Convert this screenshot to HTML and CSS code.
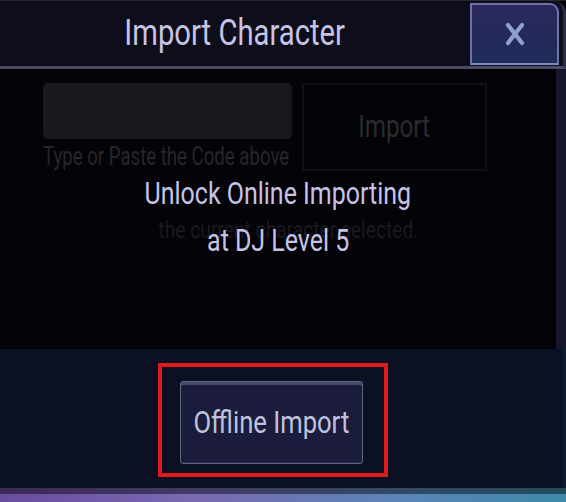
FILE: index.html
```html
<!DOCTYPE html>
<html lang="en">
<head>
<meta charset="utf-8">
<title>Import Character</title>
<link rel="stylesheet" href="styles.css">
</head>
<body>
<div class="dialog">
  <header class="header">
    <div class="title"><span class="cond">Import Character</span></div>
    <button class="close" aria-label="Close">
      <svg width="22" height="24" viewBox="0 0 22 24"><path d="M4 3 L18 21 M18 3 L4 21" stroke="#8ea0d2" stroke-width="4.2" stroke-linecap="round" fill="none"/></svg>
    </button>
  </header>
  <main class="content">
    <div class="dim">
      <div class="form-row">
        <div class="field-col">
          <div class="field"></div>
          <div class="hint"><span class="cond">Type or Paste the Code above</span></div>
        </div>
        <div class="import-btn"><span class="cond">Import</span></div>
      </div>
      <div class="desc"><span class="cond">the current character selected.</span></div>
    </div>
    <div class="lock">
      <span class="cond">Unlock Online Importing</span>
      <span class="cond">at DJ Level 5</span>
    </div>
  </main>
  <footer class="footer">
    <div class="highlight">
      <button class="offline"><span class="cond">Offline Import</span></button>
    </div>
  </footer>
  <div class="bar"></div>
</div>
</body>
</html>
```
FILE: styles.css
```css
html, body {
  margin: 0;
  padding: 0;
  background: #000;
}
body {
  width: 566px;
  height: 502px;
  overflow: hidden;
  font-family: Roboto, "Liberation Sans", sans-serif;
}
.cond {
  display: inline-block;
  white-space: nowrap;
  transform: scaleX(0.78);
  transform-origin: center;
}
.dialog {
  display: flex;
  flex-direction: column;
  height: 502px;
  box-sizing: border-box;
  border-top: 1px solid #262636;
}
.header {
  height: 68px;
  display: flex;
  background: #0e0e1b;
  border-bottom: 3px solid #4a4a66;
  border-right: 3px solid #2c2c48;
  border-top-right-radius: 12px;
  box-sizing: border-box;
}
.title {
  flex: 1;
  display: flex;
  align-items: center;
  justify-content: center;
  color: #c6c4e6;
  font-size: 37px;
  padding: 0 0 3px 0;
}
.title .cond { transform: scaleX(0.79); }
.close {
  width: 89px;
  height: 62px;
  margin: 2px 4px 0 0;
  padding: 0;
  display: flex;
  align-items: center;
  justify-content: center;
  background: linear-gradient(180deg, #2b295c 0%, #23285a 60%, #1f2d5a 100%);
  border: 2px solid #6d72aa;
  border-bottom-color: #7f88bf;
  border-top-right-radius: 9px;
  box-sizing: border-box;
}
.content {
  height: 280px;
  position: relative;
  background: #030308;
  border-right: 10px solid #17172c;
  box-shadow: inset -3px 0 0 #000;
}
.dim {
  padding: 14px 0 0 43px;
}
.form-row {
  display: flex;
  gap: 10px;
}
.field-col {
  display: flex;
  flex-direction: column;
}
.field {
  width: 249px;
  height: 56px;
  background: #19191d;
  border-radius: 5px;
}
.hint {
  color: #26262b;
  font-size: 25px;
  margin-top: 3px;
  width: 249px;
}
.hint .cond { transform: scaleX(0.745); transform-origin: left center; }
.import-btn {
  width: 185px;
  height: 88px;
  box-sizing: border-box;
  border: 2px solid #111116;
  display: flex;
  align-items: center;
  justify-content: center;
  color: #2b2b30;
  font-size: 31px;
  padding-bottom: 2px;
}
.desc {
  margin: 45px 0 0 -33px;
  text-align: center;
  color: #1a1a20;
  font-size: 24px;
  width: 556px;
}
.desc .cond { transform: scaleX(0.8); }
.lock {
  position: absolute;
  left: 0;
  right: 0;
  top: 101px;
  display: flex;
  flex-direction: column;
  align-items: center;
  color: #c6c4e6;
  font-size: 32px;
  line-height: 47px;
}
.footer {
  height: 139px;
  background: #0b1122;
  border-right: 4px solid #101a2e;
  display: flex;
  justify-content: center;
  align-items: flex-start;
  padding: 14px 16px 0 0;
  box-sizing: border-box;
}
.highlight {
  width: 230px;
  height: 114px;
  box-sizing: border-box;
  border: 4px solid #e01b1b;
  display: flex;
  align-items: flex-start;
  padding: 14px 0 0 18px;
}
.offline {
  width: 183px;
  height: 83px;
  padding: 0 0 2px;
  background: linear-gradient(180deg, #1b1c3c 0%, #1a1c3a 100%);
  border: 1px solid #5e6486;
  border-radius: 3px;
  box-shadow: inset 0 3px 0 #444a6c, inset 0 -1px 0 #2a2e4c;
  color: #bfc2de;
  font-family: Roboto, "Liberation Sans", sans-serif;
  font-size: 32px;
  display: flex;
  align-items: center;
  justify-content: center;
}
.offline .cond { transform: scaleX(0.8); }
.bar {
  flex: 1;
  background:
    linear-gradient(180deg, rgba(0,0,0,0.45) 0%, rgba(0,0,0,0.45) 45%, rgba(0,0,0,0) 46%),
    linear-gradient(90deg, #6a4c9c 0%, #7a6ab4 35%, #5a84b8 70%, #3e8aa8 100%);
}
```
